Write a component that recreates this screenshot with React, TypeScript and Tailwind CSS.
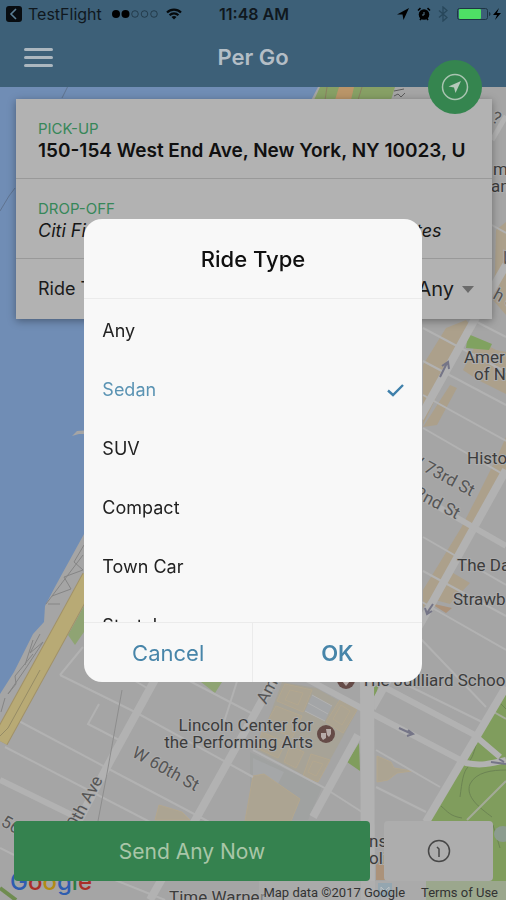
import { useState } from "react";

const rideTypes = ["Any", "Sedan", "SUV", "Compact", "Town Car", "Stretch"];

// thin cross streets, drawn in map coordinates
const streets = [
  "M60 675 L83 647 M60 675 L137 713 L253 777",
  "M99 704 L88 724 L123 742",
  "M17 720 L107 768 L215 825",
  "M5 747 L150 822",
  "M130 678 L147 688",
  "M180 676 L253 714",
  "M240 672 L224 722",
  "M253 750 L323 787 L362 812",
  "M420 638 L486 707",
  "M422 602 L506 650",
  "M405 684 L482 722",
  "M376 750 L440 787",
  "M376 787 L426 812",
  "M423 328 L506 372",
  "M423 361 L506 405",
  "M423 395 L506 441",
  "M423 428 L506 476",
  "M423 537 L506 585",
  "M423 571 L506 616",
  "M475 321 L506 337",
  "M0 848 L14 855",
  "M115 880 L165 900",
  "M490 224 L506 233",
];

const avenues = [
  "M158 674 L107 767 L78 822",
  "M278 672 L197 817 L150 900",
  "M420 418 L480 310 L506 265",
  "M358 735 L313 817",
  "M372 708 L427 612 L506 470",
  "M506 687 L426 822",
];

const buildings = [
  "M285 684 L312 690 L303 712 L277 701 Z",
  "M290 690 L303 693 L298 705 L285 700 Z",
  "M276 706 L302 716 L292 738 L266 724 Z",
  "M341 698 L357 710 L343 733 L326 722 Z",
  "M341 705 L350 711 L342 725 L333 719 Z",
  "M262 732 L286 742 L278 758 L257 748 Z",
  "M311 754 L330 760 L318 782 L303 776 Z",
  "M313 761 L323 764 L316 776 L308 772 Z",
  "M290 746 L304 752 L296 768 L284 762 Z",
];

function MapCanvas() {
  return (
    <svg
      viewBox="0 0 506 900"
      preserveAspectRatio="xMidYMid slice"
      className="absolute inset-0 h-full w-full"
      fontFamily="Roboto, 'Liberation Sans', sans-serif"
      fill="none"
      aria-hidden="true"
    >
      <rect width="506" height="900" fill="#708db5" />
      <path
        d="M318 87 L506 87 L506 900 L0 900 L0 694 L14 672 L33 634 L44 622 L45 606 L56 585 L84 534 Z"
        fill="#a5a5a5"
      />
      <path d="M72 436 L77 431 L90 430 L90 434 L79 434 Z" fill="#a5a5a5" />
      <path d="M68 86 L62 98 M15 188 L9 196 L0 211" stroke="#5f7490" strokeWidth="1" />

      {/* park strip under the app bar */}
      <path d="M320 87 H395 L391 100 H314 Z" fill="#87a065" />
      <path d="M339 87 H354 L351 100 H335 Z" fill="#ba9569" />
      <path d="M327 87 L325 100 M362 87 L358 100" stroke="#8b8060" />
      <path d="M394 91 L404 89 M394 96 L398 94 L401 97 L405 93" stroke="#5c5c5c" />
      <path d="M492 140 L506 116" stroke="#b3b3b3" strokeWidth="5" />

      {/* commercial blocks along the avenues */}
      <path
        d="M446 328 L466 320 L474 329 L455 359 L440 389 L423 425 L423 365 Z M478 340 L496 350 L506 352 L506 394 L478 380 L463 370 Z M450 385 L457 388 L437 425 L423 427 Z"
        fill="#aca08b"
      />
      <path
        d="M506 437 L498 455 L477 497 L461 528 L423 590 L423 608 L449 576 L468 540 L506 474 Z M448 570 L470 583 L450 604 L435 600 Z M496 230 L506 222 L506 315 L493 300 L495 270 Z"
        fill="#aca08b"
      />
      <path d="M376 862 L388 862 V880 H376 Z M430 603 L452 608 L446 613 Z" fill="#ab927a" />

      {/* parks */}
      <path d="M468 334 L492 344 L489 350 L466 348 Z" fill="#80a260" />
      <path d="M84 606 L68 635 L75 645 L84 632 Z M201 682 L222 682 L215 693 Z" fill="#8fa473" />
      <path
        d="M373 688 L379 684 L374 701 Z M359 743 L347 762 L360 771 Z M506 690 L489 720 L478 738 L469 754 L426 822 L426 900 L506 900 Z"
        fill="#809d5d"
      />
      <path
        d="M476 745 C473 755 472 760 466 764 M468 767 C463 772 462 782 460 797 M506 770 C492 770 476 772 470 784 C465 797 480 808 492 817 M441 806 C448 812 450 816 462 818 M493 825 L500 848 M497 700 L506 709"
        stroke="#6c8453"
      />
      <path d="M467 820 L506 781 M492 711 L506 719" stroke="#a3aa98" strokeWidth="2" />
      <ellipse cx="503" cy="834" rx="9" ry="8" fill="#8c9c8f" />

      {/* campus */}
      <path d="M250 752 L322 787 L308 820 H250 Z" fill="#a0a2a1" />
      <path d="M253 758 L284 772 L276 788 L253 778 Z" fill="#a5a7a8" />
      <path d="M282 682 L316 688 L357 711 L330 760 L316 782 L257 750 Z" fill="#a7a397" />
      <g fill="#aca492" stroke="#b3a78f">
        {buildings.map((d) => (
          <path key={d} d={d} />
        ))}
        <path d="M253 776 L264 774 L300 799 L291 821 H245 Z" />
        <path d="M377 756 L391 762 L394 768 L412 771 L397 773 L388 780 L377 782 Z" />
        <path d="M159 805 L182 812 L190 820 H155 Z" />
      </g>
      <path d="M312 695 L332 706 L325 721 L305 711 Z" fill="#a3a5a7" />
      <path d="M312 695 L332 706 M308 703 L328 714 M305 711 L325 721" stroke="#b2b2b2" />

      <g stroke="#b2b2b2" strokeWidth="2">
        {streets.map((d) => (
          <path key={d} d={d} />
        ))}
      </g>
      <g stroke="#b2b2b2" strokeWidth="8">
        {avenues.map((d) => (
          <path key={d} d={d} />
        ))}
      </g>
      <g stroke="#b2b2b2" strokeWidth="6">
        <path d="M0 780 L80 819" />
        <path d="M305 678 L365 710 L466 763 C480 766 490 764 506 760" />
        <path d="M384 687 L473 734 L500 757" />
        <path d="M423 498 L473 527 L506 546" />
      </g>
      <path d="M367 676 L368 900" stroke="#b2b2b2" strokeWidth="14" />

      {/* railway */}
      <path d="M122 690 L108 768 L98 821" stroke="#8d8d8d" />
      {/* highway */}
      <path d="M90 577 L72 610 L0 741" stroke="#a19269" strokeWidth="17" />
      <path d="M90 577 L72 610 L0 741" stroke="#b8aa75" strokeWidth="15" />
      <path d="M40 670 L8 728 L0 736" stroke="#968c66" />
      <path
        d="M83 555 L46 604 M84 545 L74 562 L83 570 L64 577 L71 589 L52 596 M48 604 H60 M40 634 L30 653 L43 642 L26 668 L8 694 L16 684 L15 676 L33 654 M33 640 L25 665 M5 698 L1 712"
        stroke="#858585"
      />
      <path d="M0 888 L16 900" stroke="#6f8c50" strokeWidth="4" />

      {/* one way arrows */}
      <g stroke="#757587" strokeWidth="2">
        <path d="M440 377 L447 363 M442 366 L448 362 L449 369" />
        <path d="M399 728 L412 734 M408 730 L413 734 L407 736" />
        <path d="M433 604 L427 613 M425 608 L427 614 L432 611" />
        <path d="M491 762 L506 764 M499 759 L504 762" />
      </g>

      {/* venue pins */}
      <circle cx="326" cy="734" r="9" fill="#654b47" />
      <circle cx="346" cy="680" r="9" fill="#654b47" />
      <path d="M321 733 H326 V738 L323 740 L321 737 Z M326 729 H331 V734 L329 737 L327 735 Z" fill="#b7aca9" />
      <path d="M342 681 H350 L346 686 Z" fill="#b7aca9" />

      <g fill="#3c3c3c" fontSize="17" stroke="#acacac" strokeWidth="2" paintOrder="stroke">
        <text x="464" y="363">Amer</text>
        <text x="474" y="380">of N</text>
        <text x="467" y="464">Histo</text>
        <text x="457" y="571">The Da</text>
        <text x="453" y="605">Strawb</text>
        <text x="361" y="686">The Juilliard School</text>
        <text x="313" y="731" textAnchor="end">Lincoln Center for</text>
        <text x="313" y="748" textAnchor="end">the Performing Arts</text>
        <text x="493" y="175">m</text>
        <text x="491" y="192">an</text>
        <text x="369" y="847">ns</text>
        <text x="369" y="864">olis</text>
        <text x="169" y="903">Time Warner</text>
      </g>
      <g fill="#555555" fontSize="17" stroke="#acacac" strokeWidth="2" paintOrder="stroke">
        <text transform="translate(406 462) rotate(28)">W 73rd St</text>
        <text transform="translate(388 483) rotate(28)">W 72nd St</text>
        <text transform="translate(131 756) rotate(29)">W 60th St</text>
        <text transform="translate(72 838) rotate(-62)">10th Ave</text>
        <text transform="translate(266 705) rotate(-62)">Amst</text>
        <text transform="translate(0 825) rotate(29)">56th</text>
        <text transform="translate(492 298) rotate(28)">h St</text>
        <text transform="translate(491 122) rotate(20)">?</text>
        <text transform="translate(500 262) rotate(20)">V</text>
      </g>
      <rect x="378" y="883" width="14" height="14" fill="#6f9cb5" />
      <path d="M381 893 V887 L385 891 L389 887 V893" stroke="#cfdbe2" />
    </svg>
  );
}

function StatusBar() {
  return (
    <div className="grid h-7 grid-cols-[1fr_auto_1fr] items-center pr-1 pl-1.5 text-base text-[#10181e]">
      <div className="flex items-center">
        <svg className="mr-1.5 h-4 w-4" viewBox="0 0 16 16">
          <rect width="16" height="16" rx="3" fill="#080c10" />
          <path d="M10 3 L5 8 L10 13" fill="none" stroke="#5b7f95" strokeWidth="1.6" />
        </svg>
        <span>TestFlight</span>
        <svg className="ml-2.5 h-2 w-[46px]" viewBox="0 0 46 8">
          <circle cx="4" cy="4" r="4" />
          <circle cx="13.500" cy="4" r="4" />
          <g fill="none" stroke="#1d3240" strokeWidth="0.8">
            <circle cx="23" cy="4" r="3.300" />
            <circle cx="32.500" cy="4" r="3.300" />
            <circle cx="42" cy="4" r="3.300" />
          </g>
        </svg>
        <svg className="ml-2 h-3 w-4" viewBox="0 0 16 12" fill="none" stroke="#05090c" strokeWidth="2.200">
          <path d="M1 4.500 C5 0.600 11 0.600 15 4.500" />
          <path d="M3.600 7.200 C6 4.700 10 4.700 12.400 7.200" />
          <path d="M8 11.500 L5.500 9 C7 7.700 9 7.700 10.500 9 Z" fill="#05090c" stroke="none" />
        </svg>
      </div>
      <span className="font-semibold">11:48 AM</span>
      <div className="flex items-center justify-end">
        <svg className="h-3 w-3" viewBox="0 0 12 12">
          <path d="M12 0 L0 6.500 L5.500 6.500 L6.500 12 Z" />
        </svg>
        <svg className="ml-2 h-3.5 w-3.5" viewBox="0 0 14 14">
          <circle cx="7" cy="7.500" r="5.300" />
          <path d="M1 3.500 L3.500 1.200 M13 3.500 L10.500 1.200 M3 13 L4.500 11 M11 13 L9.500 11" stroke="#000" strokeWidth="1.600" />
          <path d="M7 5 V8 H5" fill="none" stroke="#56768a" strokeWidth="1" />
        </svg>
        <svg className="ml-1.5 h-4 w-3" viewBox="0 0 12 16" fill="none" stroke="#28475b" strokeWidth="1.300">
          <path d="M2 4.500 L10 11.500 L6 15 V1 L10 4.500 L2 11.500" />
        </svg>
        <svg className="ml-2 h-3 w-[45px]" viewBox="0 0 45 12">
          <rect x="0.500" y="0.500" width="30" height="11" rx="2" fill="none" stroke="#1e3645" />
          <rect x="2" y="1" width="22" height="10" rx="1" fill="#4ee065" />
          <path d="M32 4 C34 4.500 34 7.500 32 8 Z" fill="#1e3645" />
          <path d="M42 0 L36 7 H40 L38 12 L44 5 H40 Z" />
        </svg>
      </div>
    </div>
  );
}

function TripCard() {
  return (
    <section className="relative mt-3 mr-3.5 ml-4 bg-[#b2b2b2] shadow-[0_2px_8px_rgba(0,0,0,0.35)]">
      <div className="flex h-20 flex-col justify-center border-b border-[#999999] pt-1 pr-4 pl-[22px]">
        <label htmlFor="pickup" className="text-[15px] leading-5 text-[#378759]">
          PICK-UP
        </label>
        <input
          id="pickup"
          readOnly
          value="150-154 West End Ave, New York, NY 10023, U"
          className="w-full bg-transparent text-[19px] leading-6 font-semibold text-[#101010] outline-none"
        />
      </div>
      <div className="flex h-20 flex-col justify-center border-b border-[#999999] pt-1 pr-4 pl-[22px]">
        <label htmlFor="dropoff" className="text-[15px] leading-5 text-[#378759]">
          DROP-OFF
        </label>
        <input
          id="dropoff"
          readOnly
          value="Citi Field, Roosevelt Ave, Queens, United States"
          className="w-full bg-transparent text-lg leading-6 text-[#161616] italic outline-none"
        />
      </div>
      <div className="flex h-[60px] items-center pr-[18px] pl-[22px] text-[#1b1b1b]">
        <label htmlFor="ride" className="flex-1 text-lg">
          Ride Type
        </label>
        <select
          id="ride"
          defaultValue="Any"
          className="w-28 appearance-none bg-transparent text-xl [text-align-last:right] outline-none"
        >
          {rideTypes.map((type) => (
            <option key={type}>{type}</option>
          ))}
        </select>
        <svg className="ml-2 h-[7px] w-3" viewBox="0 0 12 7">
          <path d="M0 0 H12 L6 7 Z" fill="#6b6b6b" />
        </svg>
      </div>
    </section>
  );
}

function RideTypeDialog() {
  const [selected, setSelected] = useState("Sedan");

  return (
    <div className="fixed inset-0 flex items-center justify-center">
      <div
        role="dialog"
        aria-labelledby="ride-type-title"
        className="w-2/3 overflow-hidden rounded-[18px] bg-[#f8f8f8]"
      >
        <h2
          id="ride-type-title"
          className="flex h-20 items-center justify-center border-b border-[#ebebeb] pt-0.5 text-[22px] font-medium text-[#101010]"
        >
          Ride Type
        </h2>
        <div className="h-[323px] overflow-hidden pt-[3px]">
          {rideTypes.map((type) => (
            <label
              key={type}
              className={`flex h-[59px] items-center justify-between px-[18px] text-lg ${
                selected === type ? "text-[#5a93b3]" : "text-[#222222]"
              }`}
            >
              <input
                type="radio"
                name="ride-type"
                className="sr-only"
                checked={selected === type}
                onChange={() => setSelected(type)}
              />
              {type}
              {selected === type && (
                <svg className="h-[13px] w-[17px]" viewBox="0 0 17 13">
                  <path d="M1 6.500 L6 11 L16 1" fill="none" stroke="#3f80ab" strokeWidth="2.400" />
                </svg>
              )}
            </label>
          ))}
        </div>
        <div className="grid h-[60px] grid-cols-2 border-t border-[#ebebeb] text-[22px] text-[#4785a9]">
          <button className="border-r border-[#ebebeb] pt-0.5">Cancel</button>
          <button className="pt-0.5 font-semibold">OK</button>
        </div>
      </div>
    </div>
  );
}

export default function App() {
  return (
    <main className="relative flex min-h-screen flex-col overflow-hidden font-[Inter,'Liberation_Sans',sans-serif]">
      <MapCanvas />

      <header className="relative bg-[#3d6078]">
        <StatusBar />
        <div className="grid h-[59px] grid-cols-[1fr_auto_1fr] items-center px-6 text-[#b4bec6]">
          <button aria-label="Menu" className="flex w-[29px] flex-col gap-[5px]">
            <span className="h-[3px] rounded-full bg-[#acb7bf]" />
            <span className="h-[3px] rounded-full bg-[#acb7bf]" />
            <span className="h-[3px] rounded-full bg-[#acb7bf]" />
          </button>
          <h1 className="text-[22px] font-semibold">Per Go</h1>
        </div>
        <button
          aria-label="My location"
          className="absolute right-6 -bottom-[27px] z-10 flex h-[54px] w-[54px] items-center justify-center rounded-full bg-[#35854f]"
        >
          <svg className="h-7 w-7" viewBox="0 0 28 28">
            <circle cx="14" cy="14" r="12.500" fill="none" stroke="#a9c4b1" strokeWidth="1.500" />
            <path d="M20 8 L7.500 13.500 L13 14.500 L14.500 20 Z" fill="#b5c9bb" />
          </svg>
        </button>
      </header>

      <TripCard />

      <footer className="relative mt-auto">
        <div
          aria-label="Google"
          className="absolute bottom-0 left-2.5 text-2xl leading-9 font-medium text-[#2e5db0]"
        >
          G<span className="text-[#a92f28]">o</span>
          <span className="text-[#b28b16]">o</span>g
          <span className="text-[#2e7b44]">l</span>
          <span className="text-[#a92f28]">e</span>
        </div>
        <div className="relative flex gap-3.5 pr-[13px] pl-3.5">
          <button className="h-[60px] flex-1 rounded-sm bg-[#35824f] pt-0.5 text-[21px] text-[#a9c6a8]">
            Send Any Now
          </button>
          <button
            aria-label="Schedule ride"
            className="flex h-[60px] w-[109px] items-center justify-center rounded-sm bg-[#adadad]"
          >
            <svg className="h-6 w-6" viewBox="0 0 24 24" fill="none" stroke="#474747">
              <circle cx="12" cy="12" r="10.500" strokeWidth="1.500" />
              <path d="M10 8 L12 10 V18" strokeWidth="1.500" />
            </svg>
          </button>
        </div>
        <div className="relative ml-auto flex h-[19px] w-fit items-center gap-4 bg-[#adadad]/60 pt-1 pr-2 pl-1 font-[Roboto,'Liberation_Sans',sans-serif] text-[13px] text-[#333333]">
          <span>Map data ©2017 Google</span>
          <a href="#terms">Terms of Use</a>
        </div>
      </footer>

      <RideTypeDialog />
    </main>
  );
}
